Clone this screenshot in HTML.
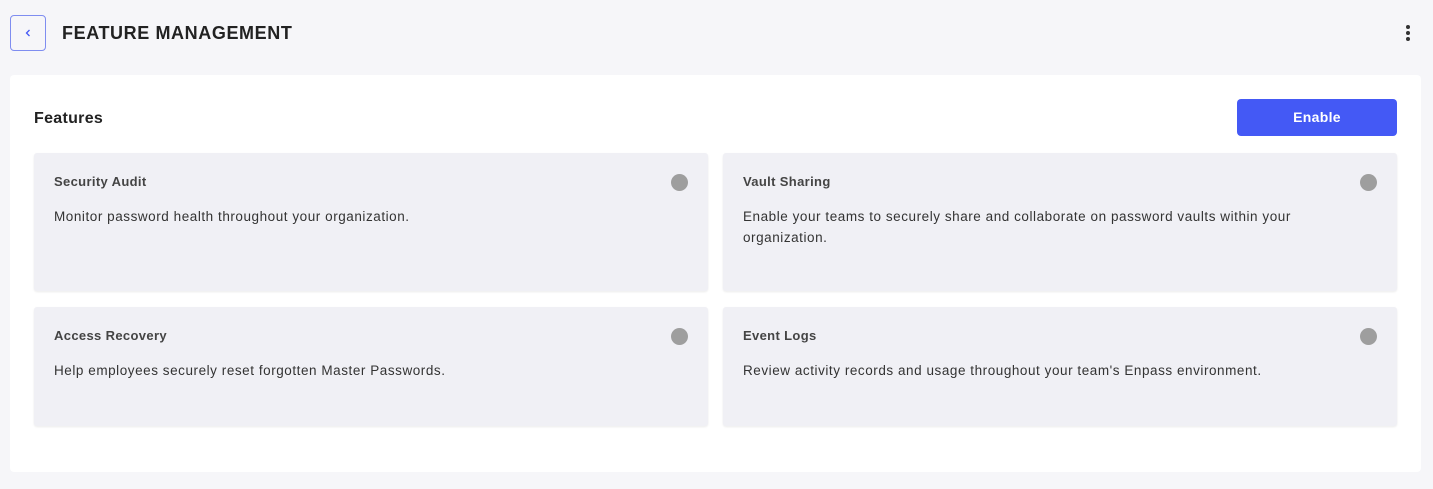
<!DOCTYPE html>
<html><head><style>
*{box-sizing:border-box;margin:0;padding:0}
body{width:1433px;height:489px;background:#f6f6f9;font-family:"Liberation Sans",sans-serif;position:relative;overflow:hidden;color:#222}
.back{position:absolute;left:10px;top:15px;width:36px;height:36px;border:1.5px solid #7f8df0;border-radius:4px;background:#f6f6f9}
.back svg{position:absolute;left:13px;top:13px}
h1{position:absolute;left:62px;top:23px;font-size:18px;font-weight:bold;color:#222;letter-spacing:0.6px}
.dots{position:absolute;left:1406px;top:25px}
.dots i{display:block;width:4px;height:4px;border-radius:50%;background:#333;margin-bottom:2px}
.panel{position:absolute;left:10px;top:75px;width:1411px;height:397px;background:#fff;border-radius:4px}
.feat{position:absolute;left:34px;top:110px;font-size:16px;font-weight:bold;color:#222;letter-spacing:0.3px}
.btn{position:absolute;left:1237px;top:99px;width:160px;height:37px;background:#4459f5;border-radius:4px;color:#fff;font-size:14px;font-weight:bold;text-align:center;line-height:37px;letter-spacing:0.3px}
.card{position:absolute;width:674px;background:#f0f0f5;border-radius:3px;box-shadow:0 1px 2px rgba(0,0,0,0.08)}
.card b{position:absolute;left:20px;top:21px;font-size:13px;color:#444;letter-spacing:0.35px}
.card p{position:absolute;left:20px;top:53px;width:560px;font-size:13.5px;line-height:21px;color:#333;letter-spacing:0.55px}
.card .c{position:absolute;right:20px;top:21px;width:17px;height:17px;border-radius:50%;background:#9e9e9e}
</style></head><body>
<div class="back"><svg width="8" height="8" viewBox="0 0 8 8"><path d="M5.5 1 L2.5 4 L5.5 7" stroke="#4459f5" stroke-width="1.3" fill="none"/></svg></div>
<h1>FEATURE MANAGEMENT</h1>
<div class="dots"><i></i><i></i><i></i></div>
<div class="panel"></div>
<div class="feat">Features</div>
<div class="btn">Enable</div>
<div class="card" style="left:34px;top:153px;height:138px"><b>Security Audit</b><span class="c"></span><p>Monitor password health throughout your organization.</p></div>
<div class="card" style="left:723px;top:153px;height:138px"><b>Vault Sharing</b><span class="c"></span><p>Enable your teams to securely share and collaborate on password vaults within your organization.</p></div>
<div class="card" style="left:34px;top:307px;height:119px"><b>Access Recovery</b><span class="c"></span><p>Help employees securely reset forgotten Master Passwords.</p></div>
<div class="card" style="left:723px;top:307px;height:119px"><b>Event Logs</b><span class="c"></span><p>Review activity records and usage throughout your team's Enpass environment.</p></div>
</body></html>
